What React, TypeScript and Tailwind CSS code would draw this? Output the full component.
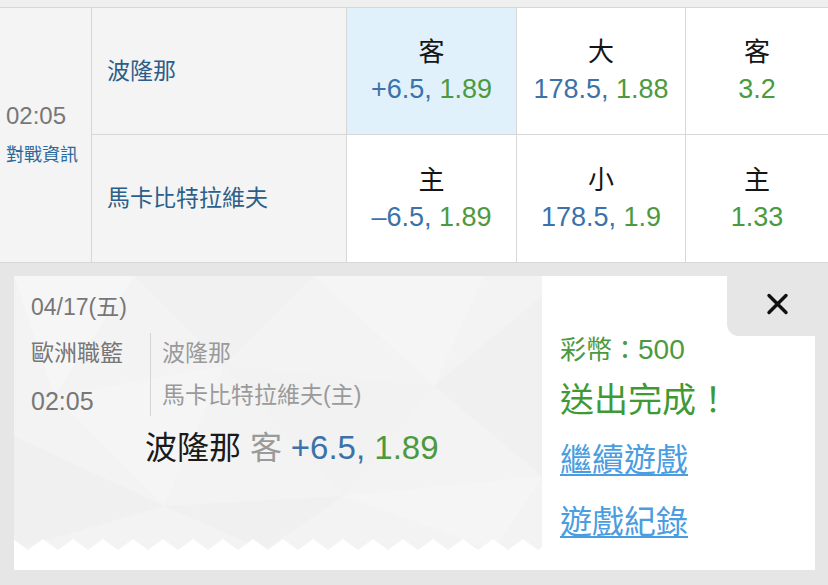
import React from 'react';

const FONT = "font-[family-name:'Liberation_Sans','Noto_Sans_CJK_TC',sans-serif]";

type Odds = { label: string; line?: string; odds: string; active?: boolean };

function OddsCell({ label, line, odds, active }: Odds) {
  return (
    <div className={`flex flex-col items-center justify-center ${active ? 'bg-[#e1f1fb]' : 'bg-white'}`}>
      <span className="text-[26px] leading-[37px] text-[#151515]">{label}</span>
      <span className="text-[27px] leading-[37px]">
        {line && <span className="text-[#3b72aa]">{line}, </span>}
        <span className="text-[#4b9a40]">{odds}</span>
      </span>
    </div>
  );
}

function LowPoly() {
  // faint triangle pattern behind the ticket
  return (
    <svg className="absolute inset-0" width="528" height="274" viewBox="0 0 528 274">
      <polygon points="0,0 120,0 40,120" fill="#f6f6f6" />
      <polygon points="120,0 300,0 210,90" fill="#f1f1f1" />
      <polygon points="300,0 470,0 420,110" fill="#f5f5f5" />
      <polygon points="420,110 528,20 528,200" fill="#f0f0f0" />
      <polygon points="40,120 210,90 150,230" fill="#f5f5f5" />
      <polygon points="210,90 420,110 330,220" fill="#f2f2f2" />
      <polygon points="0,160 150,230 0,274" fill="#f0f0f0" />
      <polygon points="330,220 528,200 480,274" fill="#f5f5f5" />
      <polygon points="150,230 330,220 250,274" fill="#f0f0f0" />
    </svg>
  );
}

function Zigzag() {
  const peaks = Array.from({ length: 19 }, (_, i) => -1 + i * 30);
  return (
    <svg className="absolute left-0 bottom-0" width="528" height="11" viewBox="0 0 528 11">
      {peaks.map((x) => (
        <polygon key={x} points={`${x - 15},11 ${x},0 ${x + 15},11`} fill="#ffffff" />
      ))}
    </svg>
  );
}

export default function App() {
  return (
    <div className={`w-[828px] h-[585px] overflow-hidden bg-[#e6e6e6] ${FONT}`}>
      {/* top strip */}
      <div className="h-[7px] bg-[#efefef]" />

      {/* odds table */}
      <div className="grid grid-cols-[91px_254px_169px_168px_142px] grid-rows-[126px_127px] gap-px bg-[#d7d7d7] border-y border-[#d7d7d7]">
        <div className="row-span-2 bg-[#f4f4f4] flex flex-col justify-center pl-[6px] gap-[14px]">
          <span className="text-[24px] leading-[26px] text-[#777777]">02:05</span>
          <span className="text-[18px] leading-[24px] text-[#2b6a9c]">對戰資訊</span>
        </div>
        <div className="bg-[#f4f4f4] flex items-center pl-[15px] text-[23px] text-[#2c5e8a]">波隆那</div>
        <OddsCell label="客" line="+6.5" odds="1.89" active />
        <OddsCell label="大" line="178.5" odds="1.88" />
        <OddsCell label="客" odds="3.2" />
        <div className="bg-[#f4f4f4] flex items-center pl-[15px] text-[23px] text-[#2c5e8a]">馬卡比特拉維夫</div>
        <OddsCell label="主" line="–6.5" odds="1.89" />
        <OddsCell label="小" line="178.5" odds="1.9" />
        <OddsCell label="主" odds="1.33" />
      </div>

      {/* bet ticket */}
      <div className="relative mt-[13px] ml-[14px] w-[801px] h-[294px] bg-white flex">
        <div className="w-[528px] h-full">
          <div className="relative h-[274px] bg-[#f3f3f3] overflow-hidden">
            <LowPoly />
            <Zigzag />
            <div className="relative pt-[16px] pl-[17px]">
              <div className="text-[23px] leading-[30px] text-[#777777]">04/17(五)</div>
              <div className="flex mt-[11px]">
                <div className="w-[119px] pt-[5px] flex flex-col gap-[18px] text-[23px] leading-[30px] text-[#777777]">
                  <span>歐洲職籃</span>
                  <span className="text-[25px]">02:05</span>
                </div>
                <div className="border-l border-[#d4d4d4] pl-[11px] py-[5px] flex flex-col gap-[12px] text-[23px] leading-[30px] text-[#9a9a9a]">
                  <span>波隆那</span>
                  <span>馬卡比特拉維夫(主)</span>
                </div>
              </div>
              <div className="mt-[12px] ml-[114px] text-[32px] leading-[40px] whitespace-nowrap">
                <span className="text-[#1a1a1a]">波隆那 </span>
                <span className="text-[#9a9a9a]">客 </span>
                <span className="text-[33px] text-[#3b72aa]">+6.5, </span>
                <span className="text-[33px] text-[#4b9a40]">1.89</span>
              </div>
            </div>
          </div>
        </div>

        <div className="flex-1 pl-[18px] pt-[58px] flex flex-col items-start">
          <span className="text-[26px] leading-[32px] text-[#4b9a40]">
            彩幣：<span className="text-[28px]">500</span>
          </span>
          <span className="mt-[12px] text-[34px] leading-[44px] text-[#3f9935]">送出完成！</span>
          <a className="mt-[18px] text-[32px] leading-[40px] text-[#4a9de0] underline underline-offset-[3px] decoration-[2px]">繼續遊戲</a>
          <a className="mt-[22px] text-[32px] leading-[40px] text-[#4a9de0] underline underline-offset-[3px] decoration-[2px]">遊戲紀錄</a>
        </div>

        {/* close tab */}
        <div className="absolute top-0 right-0 w-[88px] h-[60px] bg-[#e6e6e6] rounded-bl-[12px] flex items-center justify-center pl-[12px] pb-[4px]">
          <svg width="23" height="22" viewBox="0 0 23 22">
            <path d="M3 2.5 L20 19.5 M20 2.5 L3 19.5" stroke="#111111" strokeWidth="3.4" strokeLinecap="round" />
          </svg>
        </div>
      </div>
    </div>
  );
}
